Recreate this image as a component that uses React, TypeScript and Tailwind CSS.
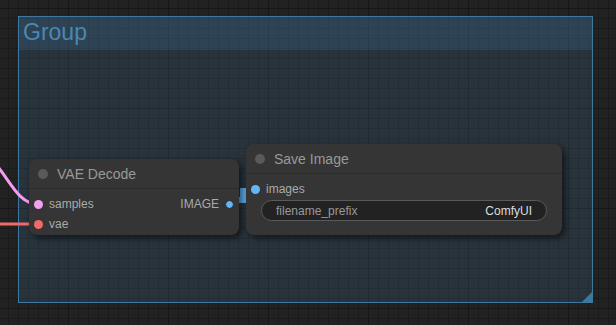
import React from 'react'

const FONT = { fontFamily: '"Liberation Sans", Arial, sans-serif' }

function Slot({ color, label, right }: { color: string; label: string; right?: boolean }) {
  return (
    <div className={`flex items-center h-5 gap-[6px] ${right ? 'flex-row-reverse' : ''}`}>
      <span className={`w-[9px] h-[9px] rounded-full ${color}`} />
      <span className="text-[12px] text-[#aaaaaa] leading-none">{label}</span>
    </div>
  )
}

function NodeTitle({ title }: { title: string }) {
  return (
    <div className="flex items-center h-[30px] pt-[1px] px-[9px] gap-[9px] border-b border-[#2c2c2c]">
      <span className="w-[10px] h-[10px] rounded-full bg-[#5a5a5a]" />
      <span className="text-[14px] text-[#999999]">{title}</span>
    </div>
  )
}

export default function App() {
  return (
    <div
      style={FONT}
      className="relative w-[616px] h-[325px] overflow-hidden bg-[#222222] bg-[linear-gradient(to_right,#171717_1px,transparent_1px),linear-gradient(to_bottom,#171717_1px,transparent_1px),linear-gradient(to_right,#1b1b1b_1px,transparent_1px),linear-gradient(to_bottom,#1b1b1b_1px,transparent_1px)] bg-[size:100px_100px,100px_100px,10px_10px,10px_10px] bg-[position:68px_8px,68px_8px,8px_8px,8px_8px]"
    >
      {/* group */}
      <div className="absolute left-[18px] top-[16px] w-[575px] h-[287px] border border-[#3f789e] bg-[#3f789e]/20">
        <div className="h-[33px] bg-[#3f789e]/25 pl-[4px] pt-[1px]">
          <span className="text-[23px] leading-[29px] text-[#4a87b3]">Group</span>
        </div>
        <div className="absolute right-0 bottom-0 w-0 h-0 border-l-[10px] border-l-transparent border-b-[10px] border-b-[#3f789e]" />
      </div>

      {/* links */}
      <svg className="absolute inset-0" width={616} height={325}>
        <path d="M -20 148 C 8 170, 14 204, 38 204" stroke="#f49cf0" strokeWidth={3} fill="none" />
        <line x1={0} y1={224} x2={38} y2={224} stroke="#f06a6a" strokeWidth={3} />
        <path d="M 229 200 L 243 200 L 243 191 L 256 191" stroke="#5aaef0" strokeWidth={6} fill="none" />
      </svg>

      {/* VAE Decode */}
      <div className="absolute left-[29px] top-[159px] w-[210px] h-[76px] rounded-[8px] bg-[#353535] shadow-[3px_3px_6px_rgba(0,0,0,0.55)]">
        <NodeTitle title="VAE Decode" />
        <div className="flex justify-between px-[5px] pt-[5px]">
          <div className="flex flex-col">
            <Slot color="bg-[#f4a0f0]" label="samples" />
            <Slot color="bg-[#f06a6a]" label="vae" />
          </div>
          <Slot color="bg-[#64b5f6] border border-[#222]" label="IMAGE" right />
        </div>
      </div>

      {/* Save Image */}
      <div className="absolute left-[246px] top-[144px] w-[316px] h-[91px] rounded-[8px] bg-[#353535] shadow-[3px_3px_6px_rgba(0,0,0,0.55)]">
        <NodeTitle title="Save Image" />
        <div className="px-[5px] pt-[5px]">
          <Slot color="bg-[#64b5f6]" label="images" />
        </div>
        <div className="mx-[15px] mt-[1px] h-[21px] rounded-full border border-[#5a5a5a] bg-[#222222] flex items-center justify-between px-[14px]">
          <span className="text-[12px] text-[#999999]">filename_prefix</span>
          <span className="text-[12px] text-[#dddddd]">ComfyUI</span>
        </div>
      </div>
    </div>
  )
}
